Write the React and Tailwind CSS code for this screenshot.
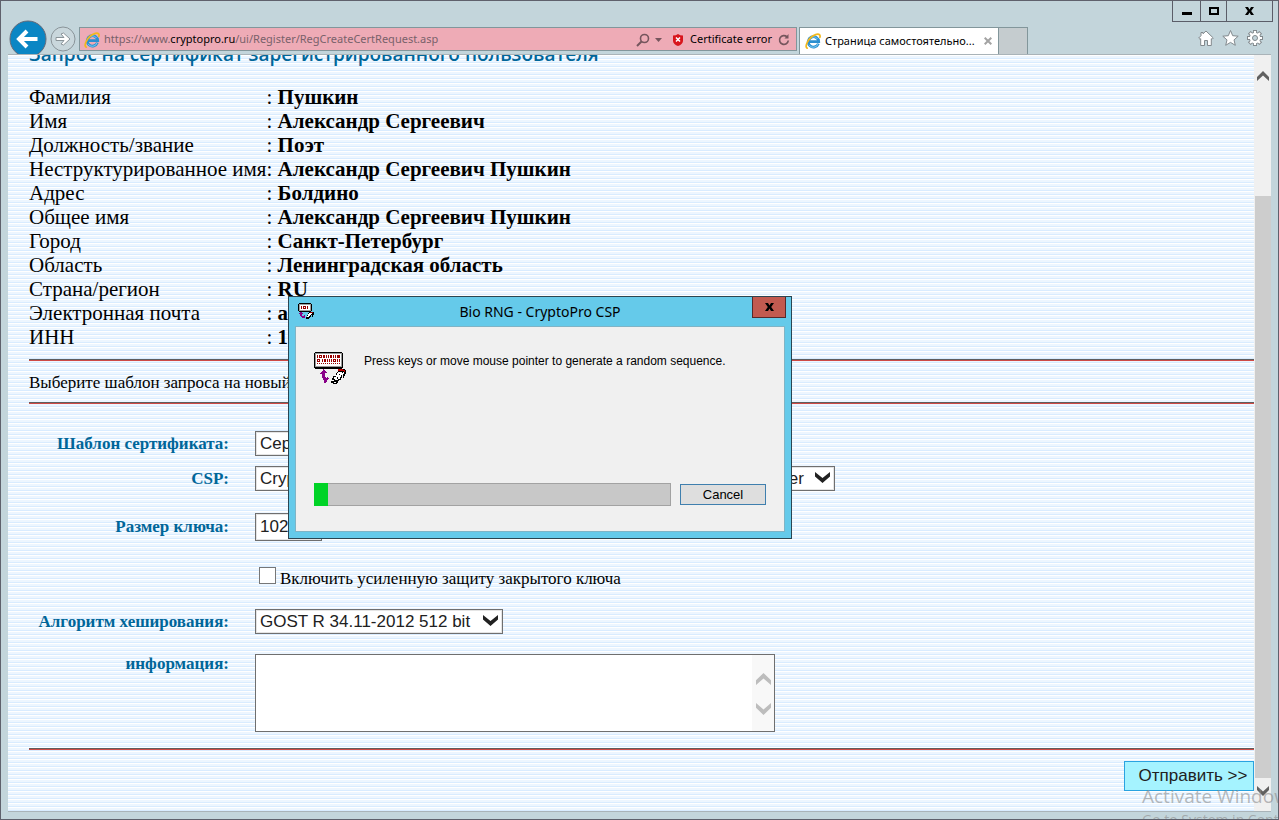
import React from "react";

const details = [
  ["Фамилия", "Пушкин"],
  ["Имя", "Александр Сергеевич"],
  ["Должность/звание", "Поэт"],
  ["Неструктурированное имя", "Александр Сергеевич Пушкин"],
  ["Адрес", "Болдино"],
  ["Общее имя", "Александр Сергеевич Пушкин"],
  ["Город", "Санкт-Петербург"],
  ["Область", "Ленинградская область"],
  ["Страна/регион", "RU"],
  ["Электронная почта", "as@pushkin.ru"],
  ["ИНН", "123456789012"],
];

function IeLogo({ className }) {
  return (
    <svg className={className} viewBox="0 0 16 16" aria-hidden="true">
      <path d="M13.4 10.600A5.200 5.200 0 1 1 13.700 8.700H4.500" fill="none" stroke="#2b8fd0" strokeWidth="2.800" />
      <path d="M13 10.800A4.900 4.900 0 0 1 4 11.800M4 6.500A5 5 0 0 1 12.500 6" fill="none" stroke="#7accf3" strokeWidth="1" />
      <path d="M2.200 15.200C-.800 13.500 3.500 4.500 10 1.900C13 .600 15.800 1 14.900 4.400" fill="none" stroke="#f2b81c" strokeWidth="1.700" strokeLinecap="round" />
    </svg>
  );
}

function Chevron({ className, up }) {
  return (
    <svg className={className} viewBox="0 0 16 10" preserveAspectRatio="none" aria-hidden="true">
      <path d={up ? "M0 10V6L8 0L16 6V10L8 4.500Z" : "M0 0V4L8 10L16 4V0L8 5.500Z"} fill="currentColor" />
    </svg>
  );
}

function Select({ id, value, className }) {
  return (
    <div className={"relative " + className}>
      <select
        id={id}
        className="block h-full w-full appearance-none border border-[#6f6f6f] bg-white pl-1 pr-6 font-['Liberation_Sans',sans-serif] text-[17px] leading-[22px] text-[#212121] outline-1 -outline-offset-2 outline-[#e4e4e4]"
      >
        <option>{value}</option>
      </select>
      <Chevron className="pointer-events-none absolute right-[5px] top-[6px] h-[11px] w-[15px] text-[#212121]" />
    </div>
  );
}

function Label({ htmlFor, children }) {
  return (
    <label htmlFor={htmlFor} className="w-[200px] shrink-0 whitespace-nowrap text-right text-[17px] font-bold leading-5 text-[#006699]">
      {children}
    </label>
  );
}

function Rule({ className = "" }) {
  return <hr className={"h-[2px] border-t border-solid border-t-[#5e5e5e] bg-[#cf4a45] " + className} />;
}

function BioIcon({ className, small }) {
  return (
    <svg className={className} viewBox={small ? "0 0 16 16" : "0 0 32 34"} shapeRendering="crispEdges" aria-hidden="true">
      {small ? (
        <>
          <path d="M1 0h12v1h1v7h-1v1h-12v-1h-1v-7h1z" fill="#000" />
          <path d="M1 1h12v7h-12z" fill="#a0a0a0" />
          <path d="M2 2h10v5h-10z" fill="#fff" />
          <path d="M3 3h1v3h-1zM5 3h3v3h-3zM9 3h1v3h-1z" fill="#900" />
          <path d="M6 4h1v1h-1z" fill="#fff" />
          <path d="M3 9h1v1h1v1h-1v2h2v-1h1v3h-3v-1h-1v-1h-1v-2h-1v-1h1v-1h1z" fill="#808" />
          <path d="M11 9h5v3h-1v2h-1v-2h-1v2h-1v1h-1v1h-3v-2h1v-2h1v-2h1z" fill="#000" />
          <path d="M11 10h3v1h-1v1h-1v1h-1v1h-2v-1h1v-2h1z" fill="#fff" />
          <path d="M12 9h3v1h-3z" fill="#900" />
        </>
      ) : (
        <>
          <path d="M1 0h27v1h1v15h-1v1h-27v-1h-1v-15h1z" fill="#000" />
          <path d="M1 1h27v14h-27z" fill="#999" />
          <path d="M2 2h25v12h-25z" fill="#fff" />
          <g fill="none" stroke="#900">
            <path d="M3.500 3v3M12.500 3v3M14.500 3v3M19.500 3v3M21.500 3v3M25.500 3v3M8.500 7v3M13.500 7v3M15.500 7v3M17.500 7v3M23.500 7v3M25.500 7v3" />
            <path d="M5.500 3.500h2v2h-2zM9.500 3.500h1v2h-1zM16.500 3.500h1v2h-1zM23.500 3.500h1v2h-1zM3.500 7.500h2v2h-2zM10.500 7.500h1v2h-1zM19.500 7.500h2v2h-2z" />
            <path d="M3 11.500h23" strokeDasharray="1 1" />
          </g>
          <path d="M9 17h1v1h1v1h1v1h1v1h-2v4h1v1h1v-1h1v1h1v1h-1v1h-1v2h-1v1h-2v-3h-1v-2h-1v-4h-2v-1h1v-1h1v-1h1z" fill="#808" />
          <path d="M24 17h7v1h1v4h-1v2h-1v2h-1v-3h-1v3h-1v2h-2v1h-1v2h-1v1h-4v-1h-2v-2h1v-3h1v-2h2v-1h1v-2h1v-1h1z" fill="#000" />
          <path d="M24 20h6v2h-1v1h-2v2h-1v2h-2v1h-3v-1h-1v-2h1v-2h2v-2h1zM18 28h2v1h-2zM20 30h2v1h-2zM25 24h1v1h-1z" fill="#fff" />
          <path d="M21 24h1v1h-1zM25 22h1v1h-1zM23 25h1v2h-1zM28 20h1v1h-1z" fill="#000" />
          <path d="M24 17h5v1h2v2h-1v-1h-6z" fill="#b00" />
        </>
      )}
    </svg>
  );
}

function BrowserBar() {
  return (
    <header className="flex h-[53px] shrink-0 overflow-hidden font-['Noto_Sans',sans-serif] text-[11px] text-black">
      <div className="flex w-[78px] shrink-0 gap-[3px] pl-2">
        <button aria-label="Назад" className="mt-[19px] h-[38px] w-[38px] shrink-0">
          <svg viewBox="0 0 38 38" className="h-[38px] w-[38px]">
            <circle cx="19" cy="19" r="18" fill="#0a86c4" stroke="#666a78" />
            <path d="M28.500 19H11M18 11L10 19L18 27" fill="none" stroke="#fff" strokeWidth="4" />
          </svg>
        </button>
        <button aria-label="Вперёд" className="mt-[25px] h-[26px] w-[26px] shrink-0">
          <svg viewBox="0 0 26 26" className="h-[26px] w-[26px]">
            <circle cx="13" cy="13" r="12" fill="#c9d7dc" stroke="#8a9499" />
            <path d="M6 11.500H14L11 8L13.500 7L20 13L13.500 19L11 18L14 14.500H6Z" fill="#fff" stroke="#8a9499" />
          </svg>
        </button>
      </div>
      <div className="mt-[26px] flex h-6 min-w-0 flex-1 items-center border border-[#82969b] bg-[#eeabb6] pl-1 pr-[6px] pt-px">
        <IeLogo className="h-4 w-4 shrink-0" />
        <p className="ml-1 min-w-0 flex-1 truncate text-[#79616a]">
          https://www.<span className="text-black">cryptopro.ru</span>/ui/Register/RegCreateCertRequest.asp
        </p>
        <button aria-label="Поиск">
          <svg viewBox="0 0 14 14" className="h-[14px] w-[14px]">
            <circle cx="8.500" cy="5.500" r="4" fill="none" stroke="#75555d" strokeWidth="1.600" />
            <path d="M5.500 8.500L1 13" stroke="#75555d" strokeWidth="2" />
          </svg>
        </button>
        <svg viewBox="0 0 7 4" className="ml-[5px] h-1 w-[7px]"><path d="M0 0H7L3.500 4Z" fill="#75555d" /></svg>
        <svg viewBox="0 0 10 12" className="ml-[11px] h-3 w-[10px]">
          <path d="M0 1.500Q3 1.500 5 0Q7 1.500 10 1.500V7Q9.500 10.500 5 12Q.5 10.500 0 7Z" fill="#d8151c" />
          <path d="M3 3.500L7 7.500M7 3.500L3 7.500" stroke="#fff" strokeWidth="1.500" />
        </svg>
        <span className="ml-[7px]">Certificate error</span>
        <button aria-label="Обновить" className="ml-[6px]">
          <svg viewBox="0 0 12 12" className="h-3 w-3">
            <path d="M9 2.800A4.400 4.400 0 1 0 10.300 6.500" fill="none" stroke="#75555d" strokeWidth="1.700" />
            <path d="M6.500 4.500H10.500V0Z" fill="#75555d" />
          </svg>
        </button>
      </div>
      <div className="ml-[2px] mt-[26px] flex h-[27px] w-[229px] shrink-0">
        <div className="flex w-[200px] items-center border border-b-0 border-[#82969b] bg-white pl-[5px] pr-[6px]">
          <IeLogo className="h-4 w-4 shrink-0" />
          <span className="ml-1 flex-1 whitespace-nowrap">Страница самостоятельно...</span>
          <button aria-label="Закрыть вкладку">
            <svg viewBox="0 0 8 8" className="h-2 w-2"><path d="M.7.7L7.300 7.300M7.300.7L.7 7.300" stroke="#a3a3a3" strokeWidth="2" /></svg>
          </button>
        </div>
        <button aria-label="Новая вкладка" className="w-[29px] border border-b-0 border-l-0 border-[#82969b] bg-[#c5cccf]" />
      </div>
      <div className="flex w-[250px] shrink-0 flex-col items-end pr-[5px]">
        <div className="flex h-[21px] divide-x divide-[#5b5d68] border border-t-0 border-[#5b5d68]">
          <button aria-label="Свернуть" className="flex w-7 items-center justify-center">
            <svg viewBox="0 0 10 10" className="h-[10px] w-[10px]"><path d="M0 6H10V9H0Z" /></svg>
          </button>
          <button aria-label="Развернуть" className="flex w-[26px] items-center justify-center">
            <svg viewBox="0 0 10 8" className="h-2 w-[10px]"><path d="M1 1H9V7H1Z" fill="none" stroke="#000" strokeWidth="2" /></svg>
          </button>
          <button aria-label="Закрыть" className="flex w-[45px] items-center justify-center">
            <svg viewBox="0 0 9 8" className="h-2 w-[9px]"><path d="M0 0H3L4.500 2.500L6 0H9L6.200 4L9 8H6L4.500 5.500L3 8H0L2.800 4Z" /></svg>
          </button>
        </div>
        <div className="mt-2 flex gap-2 pr-[10px]">
          <button aria-label="Домой">
            <svg viewBox="0 0 16 16" className="h-4 w-4"><path d="M8 1L15.300 8L14 9.300L13.300 8.700V15.500H9.500V10.500H6.500V15.500H2.700V8.700L2 9.300L.7 8L3 5.700V2.500H5V3.800Z" fill="#fff" stroke="#82898d" /></svg>
          </button>
          <button aria-label="Избранное">
            <svg viewBox="0 0 16 16" className="h-4 w-[17px]"><path d="M8 .5L10.200 5.700L15.700 6.200L11.500 9.900L12.800 15.300L8 12.400L3.200 15.300L4.500 9.900L.3 6.200L5.800 5.700Z" fill="#fff" stroke="#82898d" /></svg>
          </button>
          <button aria-label="Сервис">
            <svg viewBox="0 0 16 16" className="h-4 w-4">
              <path d="M8 0V16M0 8H16M2.300 2.300L13.700 13.700M13.700 2.300L2.300 13.700" stroke="#82898d" strokeWidth="4" />
              <circle cx="8" cy="8" r="6" fill="#82898d" />
              <path d="M8 1V15M1 8H15M3 3L13 13M13 3L3 13" stroke="#fff" strokeWidth="2.200" />
              <circle cx="8" cy="8" r="5.200" fill="#fff" />
              <circle cx="8" cy="8" r="2.500" fill="#c3d5db" stroke="#82898d" />
            </svg>
          </button>
        </div>
      </div>
    </header>
  );
}

function RandomDialog() {
  return (
    <section
      role="dialog"
      aria-labelledby="dialog-title"
      className="absolute left-[287px] top-[295px] flex h-[243px] w-[504px] flex-col border border-[#2b4552] bg-[#65caea] px-[6px] pb-[6px] text-black"
    >
      <div className="relative flex h-[29px] shrink-0 items-center justify-center">
        <BioIcon small className="absolute left-[3px] top-[6px] h-4 w-4" />
        <h2 id="dialog-title" className="font-['Noto_Sans',sans-serif] text-sm">Bio RNG - CryptoPro CSP</h2>
        <button aria-label="Закрыть окно" className="absolute -right-[1px] top-0 flex h-[21px] w-[34px] items-center justify-center border border-t-0 border-[#57292b] bg-[#c25a50]">
          <svg viewBox="0 0 9 8" className="h-2 w-[9px]"><path d="M0 0H3L4.500 2.500L6 0H9L6.200 4L9 8H6L4.500 5.500L3 8H0L2.800 4Z" /></svg>
        </button>
      </div>
      <div className="flex flex-1 flex-col justify-between border border-[#7fb4c6] bg-[#f0f0f0] pb-[25px] pl-[18px] pr-[18px] pt-[25px] font-['Liberation_Sans',sans-serif] text-[13px]">
        <div className="flex gap-[18px]">
          <BioIcon className="h-[34px] w-8" />
          <p className="text-xs leading-[18px]">Press keys or move mouse pointer to generate a random sequence.</p>
        </div>
        <div className="flex items-center gap-[9px]">
          <div role="progressbar" aria-label="Random sequence" aria-valuenow={4} className="h-[23px] flex-1 border border-[#a2a2a2] bg-[#c8c8c8]">
            <div className="-ml-px -mt-px h-[23px] w-[14px] bg-[#00d326]" />
          </div>
          <button className="h-[21px] w-[86px] border border-[#3f7fae] bg-[#dedede]">Cancel</button>
        </div>
      </div>
    </section>
  );
}

export default function App() {
  return (
    <div className="relative flex h-screen flex-col overflow-hidden border border-[#5f616c] bg-[#c3d5db] font-['Liberation_Serif',serif] text-black">
      <BrowserBar />
      <div className="mx-[7px] mb-[7px] flex min-h-0 flex-1 border-y border-[#a9b3b8] bg-[repeating-linear-gradient(to_bottom,#ffffff_0px,#ffffff_1px,#edf6ff_1px,#edf6ff_3px,#d9ecff_3px,#d9ecff_4px)]">
        <main className="min-w-0 flex-1 overflow-hidden pl-[21px]">
          <h1 className="-mt-[9px] font-['Open_Sans',sans-serif] text-[19px] font-semibold leading-4 text-[#006699]">
            Запрос на сертификат зарегистрированного пользователя
          </h1>
          <table className="mt-[23px] text-[21px] leading-6">
            <tbody>
              {details.map(([name, value]) => (
                <tr key={name}>
                  <th scope="row" className="w-[236px] whitespace-nowrap p-0 text-left font-normal">{name}</th>
                  <td className="whitespace-nowrap p-0">: <b>{value}</b></td>
                </tr>
              ))}
            </tbody>
          </table>
          <Rule className="mt-[10px]" />
          <p className="mb-[9px] mt-3 text-[17px] leading-5">Выберите шаблон запроса на новый сертификат</p>
          <Rule />
          <form>
            <div className="mt-[27px] flex items-center gap-[26px]">
              <Label htmlFor="template">Шаблон сертификата:</Label>
              <Select id="template" value="Сертификат" className="h-[25px] w-[320px]" />
            </div>
            <div className="mt-[10px] flex items-center gap-[26px]">
              <Label htmlFor="csp">CSP:</Label>
              <Select id="csp" value="Crypto-Pro GOST R 34.10-2012 System Cryptographic Service Provider" className="h-[25px] w-[580px]" />
            </div>
            <div className="mt-[22px] flex items-center gap-[26px]">
              <Label htmlFor="keysize">Размер ключа:</Label>
              <Select id="keysize" value="1024" className="h-7 w-[67px]" />
            </div>
            <div className="mt-[26px] flex items-start gap-1 pl-[230px] text-[17px] leading-6">
              <input id="protect" type="checkbox" className="h-[17px] w-[17px] appearance-none border border-[#777] bg-white" />
              <label htmlFor="protect">Включить усиленную защиту закрытого ключа</label>
            </div>
            <div className="mt-[18px] flex items-center gap-[26px]">
              <Label htmlFor="hash">Алгоритм хеширования:</Label>
              <Select id="hash" value="GOST R 34.11-2012 512 bit" className="h-[25px] w-[248px]" />
            </div>
            <div className="mt-5 flex items-start gap-[26px]">
              <Label htmlFor="info">информация:</Label>
              <div className="flex h-[78px] w-[520px] border border-[#6f6f6f] bg-white">
                <textarea id="info" className="flex-1 resize-none p-1 outline-none" />
                <div className="flex w-[22px] flex-col items-center gap-[18px] bg-[#f8f8f8] pt-[18px] text-[#bdbdbd]">
                  <Chevron up className="h-3 w-[15px]" />
                  <Chevron className="h-3 w-[15px]" />
                </div>
              </div>
            </div>
            <Rule className="mt-4" />
            <div className="mt-[11px] flex justify-end">
              <button type="submit" className="h-[30px] w-[130px] border border-[#2aa3e0] bg-[#a5f3ff] pl-2 font-['Liberation_Sans',sans-serif] text-[17px] text-[#212121]">
                Отправить &gt;&gt;
              </button>
            </div>
          </form>
        </main>
        <div aria-hidden="true" className="flex w-[17px] shrink-0 flex-col items-center bg-[#f0f0f0] pb-[15px] text-[#606060]">
          <Chevron up className="mb-[115px] mt-4 h-[10px] w-3 shrink-0" />
          <div className="w-4 flex-1 bg-[#cdcdcd]" />
          <Chevron className="mt-2 h-[10px] w-3 shrink-0" />
        </div>
      </div>
      <RandomDialog />
      <div className="pointer-events-none absolute left-[1141px] top-[781px] whitespace-nowrap font-['Open_Sans',sans-serif] text-[#8c8c8c]/60">
        <p className="text-[19px] leading-7">Activate Windows</p>
        <p className="text-sm leading-5">Go to System in Control Panel</p>
      </div>
    </div>
  );
}
